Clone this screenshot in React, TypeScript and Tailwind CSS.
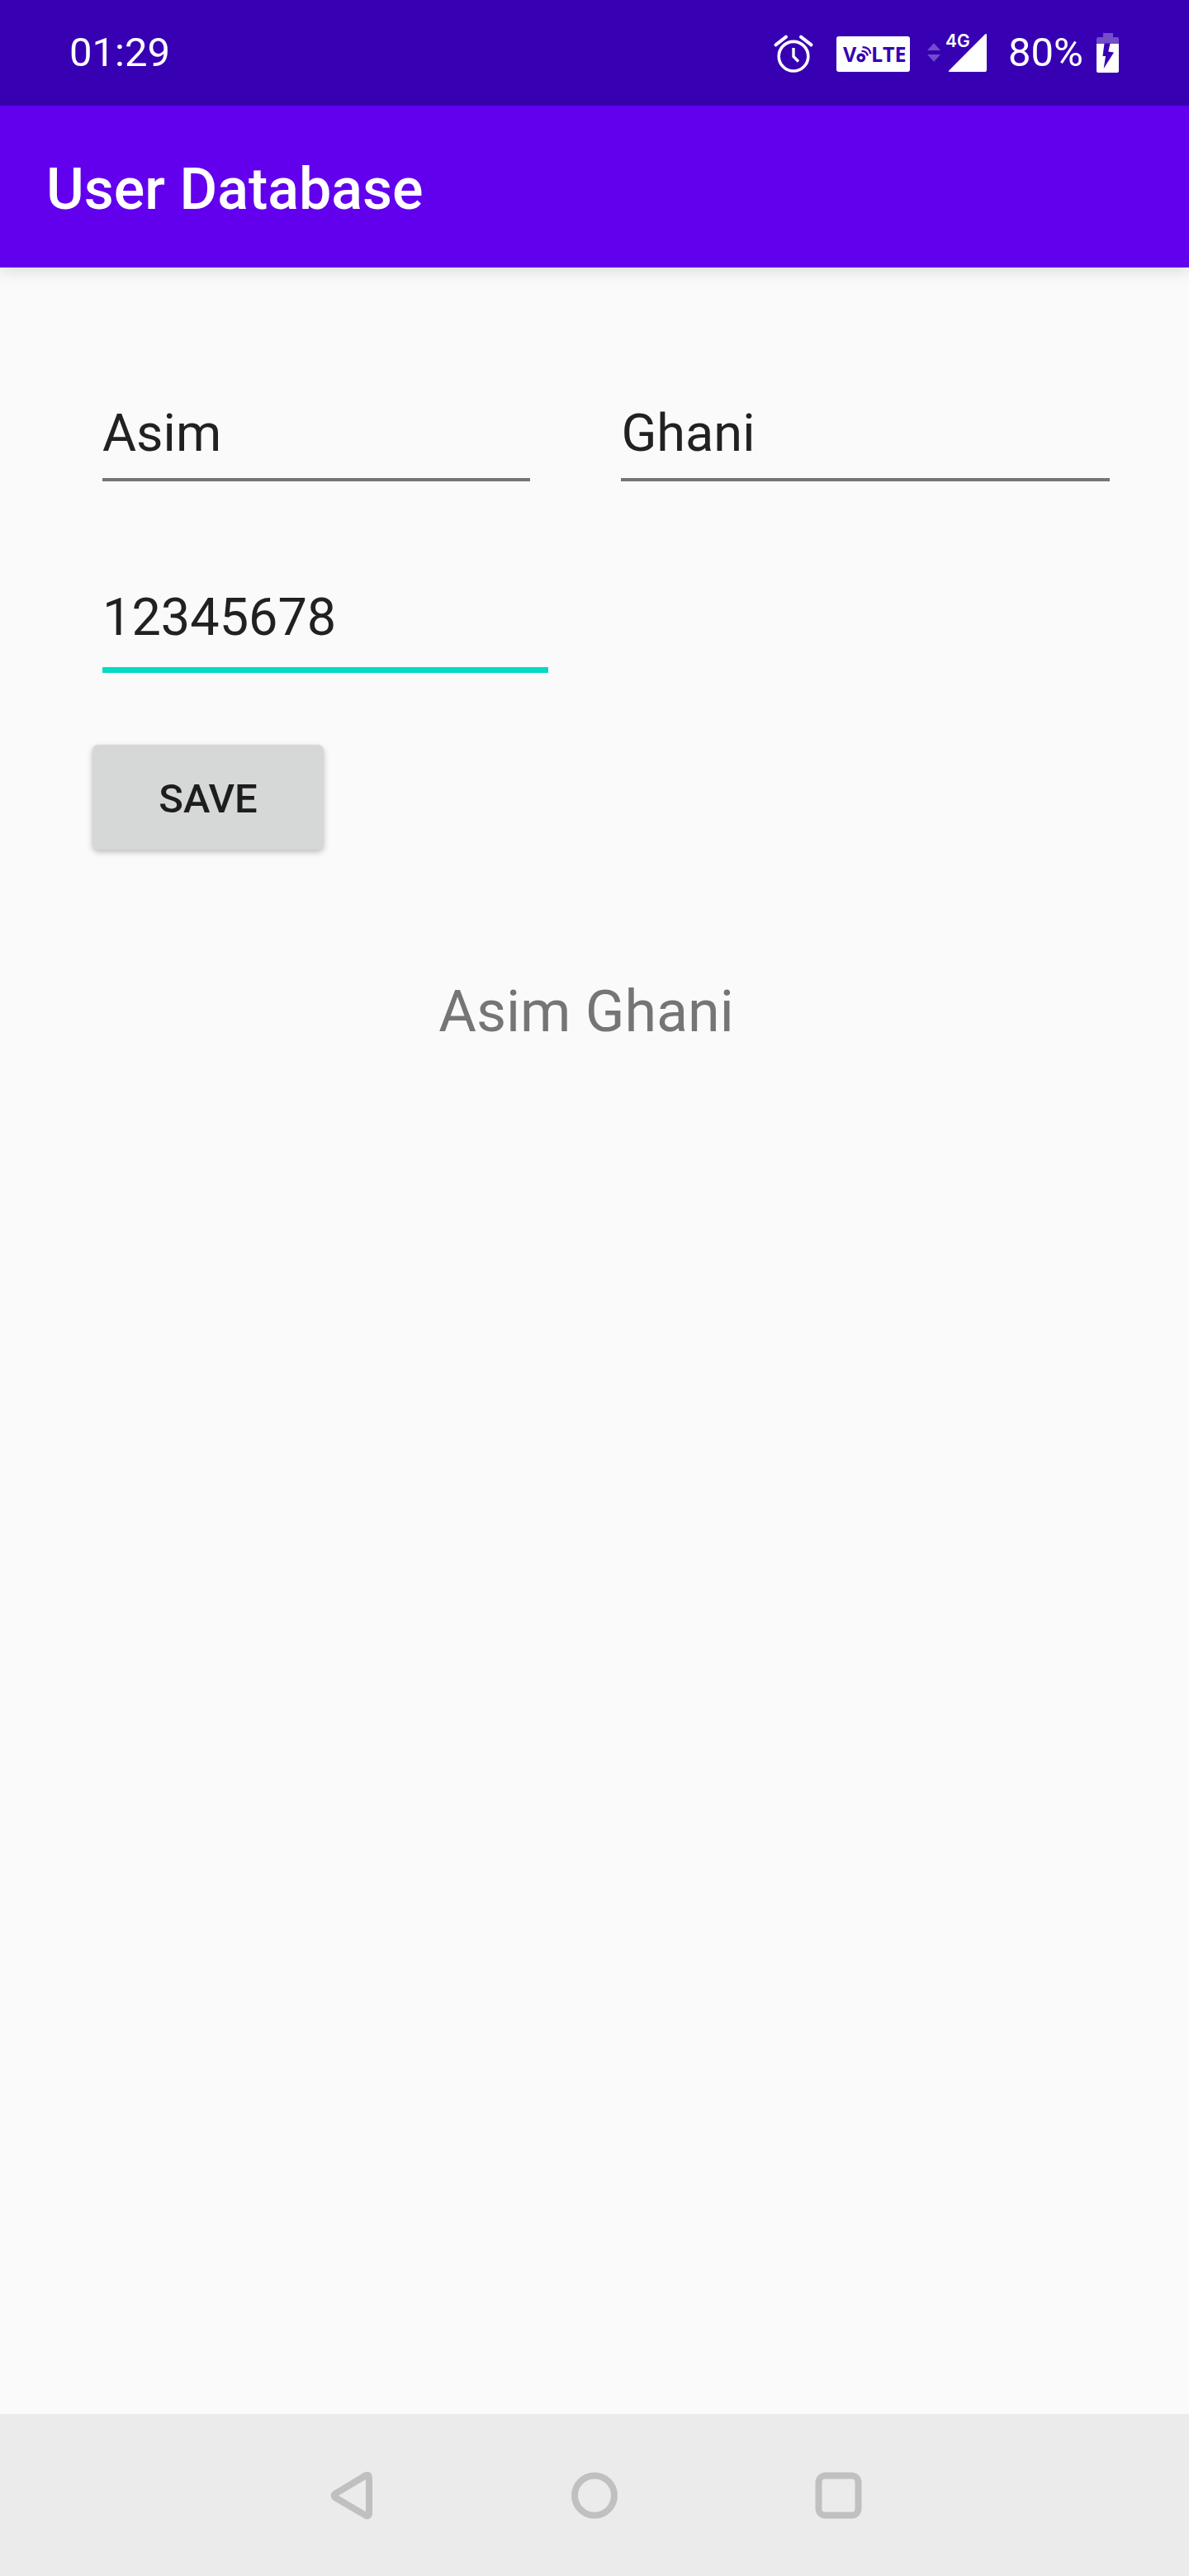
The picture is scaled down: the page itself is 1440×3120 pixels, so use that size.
import { useState } from "react";

function AlarmIcon() {
  return (
    <svg className="h-12 w-12 overflow-visible" viewBox="0 0 48 48" fill="none" stroke="#fff" strokeLinecap="round" aria-label="Alarm set">
      <circle cx="24" cy="28.2" r="17.8" strokeWidth="3.6" />
      <path d="M2.5 14.3 15 4.7M33 4.7l12.5 9.6" strokeWidth="4" />
      <path d="M24 18v10.500l6 6" strokeWidth="3.4" strokeLinecap="butt" />
    </svg>
  );
}

function VolteIcon() {
  return (
    <svg className="h-12 w-[90px] overflow-visible" viewBox="0 0 90 48" aria-label="VoLTE">
      <rect x="0" y="4" width="89" height="43" rx="3" fill="#fff" />
      <g fill="#3700b3" fontFamily="'Open Sans'" fontWeight="700">
        <text x="8" y="35" fontSize="25">V</text>
        <text x="42" y="35" fontSize="25">LTE</text>
      </g>
      <circle cx="29.8" cy="29.9" r="3.7" fill="none" stroke="#3700b3" strokeWidth="3.4" />
      <g fill="none" stroke="#3700b3" strokeWidth="2.2">
        <path d="M30.500 21.800q6.500-.2 7.200 5.800" />
        <path d="M31.500 17.200q8.800 0 9.800 8" />
      </g>
    </svg>
  );
}

function SignalIcon() {
  return (
    <svg className="h-12 w-[72px] overflow-visible" viewBox="0 0 72 48" aria-label="4G signal">
      <path d="M8 12.300 16 21H0zM0 26h16l-8 8.700z" fill="#734dca" />
      <path d="M27 47q-2 0-.8-1.400L70 1.600q2-1.400 2 .8V45q0 2-2 2z" fill="#fff" />
      <text x="22" y="17" fontSize="21" fontWeight="600" fontFamily="Inter" fill="#fff">4G</text>
    </svg>
  );
}

function BatteryIcon() {
  return (
    <svg className="h-12 w-7" viewBox="0 0 28 48" aria-label="Battery charging">
      <path d="M0 13V7q0-2 2-2h6V0h12v5h5q2 0 2 2v6z" fill="#734dca" />
      <path d="M0 13h27v33q0 2-2 2H2q-2 0-2-2z" fill="#fff" />
      <path d="M9.500 12.500h7L14.300 22.500 21 23.500 8.700 43 11 28H7.500z" fill="#3700b3" />
    </svg>
  );
}

type FieldProps = {
  label: string;
  value: string;
  onChange: (value: string) => void;
  line: string;
};

function Field({ label, value, onChange, line }: FieldProps) {
  return (
    <input
      type="text"
      aria-label={label}
      value={value}
      onChange={(e) => onChange(e.target.value)}
      className={`block w-full min-w-0 bg-transparent text-[63px] leading-[75px] text-[#212121] outline-none ${line}`}
    />
  );
}

export default function App() {
  const [first, setFirst] = useState("Asim");
  const [last, setLast] = useState("Ghani");
  const [phone, setPhone] = useState("12345678");
  const [saved, setSaved] = useState("Asim Ghani");

  return (
    <div className="flex min-h-screen flex-col bg-[#fafafa] font-['Roboto',sans-serif]">
      <div className="flex h-32 items-center justify-between bg-[#3700b3] px-[84px] text-[49px] text-white">
        <span>01:29</span>
        <div className="flex items-center">
          <AlarmIcon />
          <div className="ml-7 mr-5"><VolteIcon /></div>
          <SignalIcon />
          <span className="ml-[26px] mr-4">80%</span>
          <BatteryIcon />
        </div>
      </div>

      <header className="flex h-[196px] items-center bg-[#6200ee] px-14 pt-1.5 shadow-[0_4px_18px_rgba(0,0,0,0.13)]">
        <h1 className="text-[70px] font-medium text-white">User Database</h1>
      </header>

      <main className="flex-1 pt-[163px] pr-24 pl-28">
        <form
          onSubmit={(e) => {
            e.preventDefault();
            setSaved(`${first} ${last}`);
          }}
        >
          <div className="grid grid-cols-[518fr_591fr] gap-[110px] pl-3">
            <Field label="First name" value={first} onChange={setFirst} line="border-b-4 border-[#757575] pb-[17px]" />
            <Field label="Last name" value={last} onChange={setLast} line="border-b-4 border-[#757575] pb-[17px]" />
          </div>
          <div className="mt-[127px] w-[552px] max-w-full pl-3">
            <Field label="Phone number" value={phone} onChange={setPhone} line="border-b-[7px] border-[#03dac5] pb-[23px]" />
          </div>
          <button
            type="submit"
            className="mt-[87px] block h-[127px] w-[280px] rounded-[7px] bg-[#d6d7d7] pt-1 text-[49px] font-medium text-[#1d1d1d] shadow-[0_3px_7px_rgba(0,0,0,0.25)]"
          >
            SAVE
          </button>
        </form>
        <p className="mt-[155px] pr-9 text-center text-[70px] leading-[82px] text-[#757575]">{saved}</p>
      </main>

      <nav className="flex h-[196px] justify-center bg-[#ebebeb] text-[#c0c0c0]" aria-label="System navigation">
        <div className="grid w-[885px] max-w-full grid-cols-3">
          <button type="button" aria-label="Back" className="flex items-center justify-center">
            <svg className="h-16 w-16" viewBox="0 0 64 64" fill="none" stroke="currentColor" strokeWidth="8">
              <path d="M52.500 9.500v46q-.8 2.700-3.600 1.700L12 35.600q-3.600-2.600 0-5.200L48.900 8.300q2.800-1 3.600 1.700z" transform="translate(1.500 -.3)" />
            </svg>
          </button>
          <button type="button" aria-label="Home" className="flex items-center justify-center">
            <svg className="h-16 w-16" viewBox="0 0 64 64" fill="none" stroke="currentColor" strokeWidth="8">
              <circle cx="32" cy="32.500" r="24" />
            </svg>
          </button>
          <button type="button" aria-label="Recent apps" className="flex items-center justify-center">
            <svg className="h-16 w-16" viewBox="0 0 64 64" fill="none" stroke="currentColor" strokeWidth="8">
              <rect x="8.500" y="8.500" width="48" height="48" rx="8" />
            </svg>
          </button>
        </div>
      </nav>
    </div>
  );
}
